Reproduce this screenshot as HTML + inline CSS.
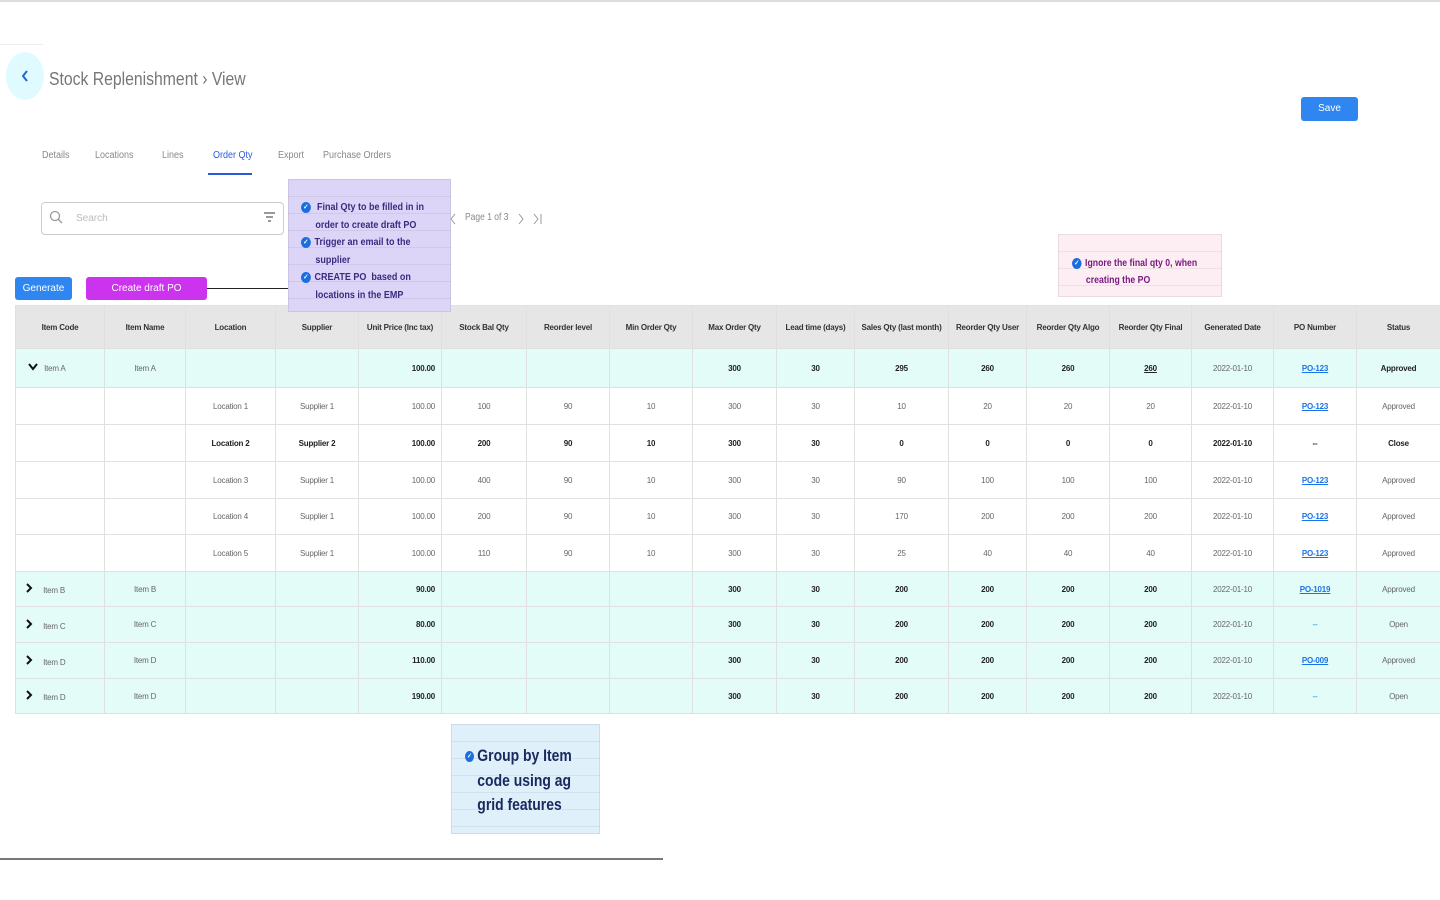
<!DOCTYPE html>
<html><head><meta charset="utf-8"><style>
*{box-sizing:border-box;margin:0;padding:0}
body{width:1440px;height:900px;background:#fff;position:relative;overflow:hidden;font-family:"Liberation Sans",sans-serif;color:#333}
.a{position:absolute}
table{position:absolute;left:15px;top:305px;border-collapse:collapse;table-layout:fixed;width:1425px;font-size:8px}
td,th{border:1px solid #e0e0e0;text-align:center;color:#666;white-space:nowrap;overflow:hidden;letter-spacing:-0.2px}
th{background:#e6e6e6;color:#333;font-weight:bold;font-size:8px}
tr.g td{background:#e3fcf7}
.b{font-weight:bold;color:#222!important}
.r{text-align:right;padding-right:6px}
.lk{color:#1a73e8!important;text-decoration:underline;font-weight:bold}
.note{position:absolute;background-image:repeating-linear-gradient(to bottom,transparent 0,transparent 16px,rgba(0,0,0,.06) 16px,rgba(0,0,0,.06) 17px);font-weight:bold;border:1px solid rgba(0,0,0,.08);white-space:nowrap}
.note .in{transform-origin:0 0}
.chk{display:inline-block;width:11px;height:11px;border-radius:50%;background:#1a6fe0;color:#fff;font-size:7px;line-height:11px;text-align:center;vertical-align:middle;margin-right:4px}
.tab span{position:absolute;white-space:nowrap;transform:scaleX(.9);transform-origin:0 0}
</style></head><body>
<div class="a" style="left:0;top:0;width:1440px;height:2px;background:#ddd"></div>
<div class="a" style="left:0;top:44px;width:43px;height:1px;background:#eee"></div>
<div class="a" style="left:6px;top:52px;width:38px;height:48px;border-radius:50%;background:#e0fbff"></div>
<svg class="a" style="left:20px;top:69px" width="10" height="14"><path d="M7 2L3 7l4 5" fill="none" stroke="#2563d8" stroke-width="2"/></svg>
<div class="a" style="left:49px;top:69px;color:#777;font-size:18px;white-space:nowrap;transform:scaleX(.875);transform-origin:0 0">Stock Replenishment › View</div>
<div class="a" style="left:1301px;top:97px;width:57px;height:24px;background:#2f86f0;border-radius:3px;color:#fff;font-size:10px;text-align:center;line-height:24px">Save</div>
<div class="a tab" style="top:150px;left:0;font-size:10px;color:#888">
<span style="left:42px">Details</span><span style="left:95px">Locations</span><span style="left:162px">Lines</span><span style="left:213px;color:#2a5bd7">Order Qty</span><span style="left:278px">Export</span><span style="left:323px">Purchase Orders</span></div>
<div class="a" style="left:208px;top:173px;width:44px;height:2px;background:#2a5bd7"></div>
<div class="a" style="left:41px;top:202px;width:243px;height:33px;border:1.5px solid #ccc;border-radius:4px"></div>
<svg class="a" style="left:49px;top:210px" width="14" height="14"><circle cx="6" cy="6" r="4.5" fill="none" stroke="#999" stroke-width="1.3"/><path d="M9 9l4 4" stroke="#999" stroke-width="1.3"/></svg>
<div class="a" style="left:76px;top:213px;font-size:10px;color:#bbb">Search</div>
<svg class="a" style="left:263px;top:211px" width="13" height="13"><path d="M1 2h11M3 6h7M5 10h3" stroke="#999" stroke-width="2"/></svg>
<svg class="a" style="left:450px;top:213px" width="96" height="12"><path d="M5 1L1 6l4 5M69 1l4 5-4 5M84 1l4 5-4 5M91 1v10" fill="none" stroke="#999" stroke-width="1"/></svg>
<div class="a" style="left:465px;top:212px;font-size:10px;color:#888;white-space:nowrap;transform:scaleX(.85);transform-origin:0 0">Page 1 of 3</div>
<div class="a" style="left:15px;top:277px;width:57px;height:23px;background:#2f86f0;border-radius:3px;color:#fff;font-size:10px;text-align:center;line-height:23px">Generate</div>
<div class="a" style="left:86px;top:277px;width:121px;height:23px;background:#cc33ee;border-radius:3px;color:#fff;font-size:10px;text-align:center;line-height:23px">Create draft PO</div>
<div class="a" style="left:207px;top:288px;width:81px;height:1px;background:#222"></div>
<table>
<colgroup><col style="width:89px"><col style="width:81px"><col style="width:90px"><col style="width:83px"><col style="width:83px"><col style="width:85px"><col style="width:83px"><col style="width:83px"><col style="width:84px"><col style="width:78px"><col style="width:94px"><col style="width:78px"><col style="width:83px"><col style="width:82px"><col style="width:82px"><col style="width:83px"><col style="width:84px"></colgroup>
<tr style="height:43px"><th>Item Code</th><th>Item Name</th><th>Location</th><th>Supplier</th><th>Unit Price (Inc tax)</th><th>Stock Bal Qty</th><th>Reorder level</th><th>Min Order Qty</th><th>Max Order Qty</th><th>Lead time (days)</th><th>Sales Qty (last month)</th><th>Reorder Qty User</th><th>Reorder Qty Algo</th><th>Reorder Qty Final</th><th>Generated Date</th><th>PO Number</th><th>Status</th></tr>
<tr class="g" style="height:39px"><td style="text-align:left;padding-left:12px"><svg width="10" height="8"><path d="M1 1l4 5 4-5" fill="none" stroke="#111" stroke-width="2"/></svg>&nbsp;&nbsp;&nbsp;Item A</td><td>Item A</td><td></td><td></td><td class="r b">100.00</td><td></td><td></td><td></td><td class="b">300</td><td class="b">30</td><td class="b">295</td><td class="b">260</td><td class="b">260</td><td class="b" style="text-decoration:underline">260</td><td>2022-01-10</td><td class="lk">PO-123</td><td class="b">Approved</td></tr>
<tr style="height:37px"><td></td><td></td><td>Location 1</td><td>Supplier 1</td><td class="r">100.00</td><td>100</td><td>90</td><td>10</td><td>300</td><td>30</td><td>10</td><td>20</td><td>20</td><td>20</td><td>2022-01-10</td><td class="lk">PO-123</td><td>Approved</td></tr>
<tr style="height:37px"><td></td><td></td><td class="b">Location 2</td><td class="b">Supplier 2</td><td class="r b">100.00</td><td class="b">200</td><td class="b">90</td><td class="b">10</td><td class="b">300</td><td class="b">30</td><td class="b">0</td><td class="b">0</td><td class="b">0</td><td class="b">0</td><td class="b">2022-01-10</td><td class="b">--</td><td class="b">Close</td></tr>
<tr style="height:37px"><td></td><td></td><td>Location 3</td><td>Supplier 1</td><td class="r">100.00</td><td>400</td><td>90</td><td>10</td><td>300</td><td>30</td><td>90</td><td>100</td><td>100</td><td>100</td><td>2022-01-10</td><td class="lk">PO-123</td><td>Approved</td></tr>
<tr style="height:36px"><td></td><td></td><td>Location 4</td><td>Supplier 1</td><td class="r">100.00</td><td>200</td><td>90</td><td>10</td><td>300</td><td>30</td><td>170</td><td>200</td><td>200</td><td>200</td><td>2022-01-10</td><td class="lk">PO-123</td><td>Approved</td></tr>
<tr style="height:37px"><td></td><td></td><td>Location 5</td><td>Supplier 1</td><td class="r">100.00</td><td>110</td><td>90</td><td>10</td><td>300</td><td>30</td><td>25</td><td>40</td><td>40</td><td>40</td><td>2022-01-10</td><td class="lk">PO-123</td><td>Approved</td></tr>
<tr class="g" style="height:35px"><td style="text-align:left;padding-left:9px"><svg width="8" height="10"><path d="M2 1l4 4-4 4" fill="none" stroke="#111" stroke-width="2"/></svg>&nbsp;&nbsp;&nbsp;&nbsp;&nbsp;Item B</td><td>Item B</td><td></td><td></td><td class="r b">90.00</td><td></td><td></td><td></td><td class="b">300</td><td class="b">30</td><td class="b">200</td><td class="b">200</td><td class="b">200</td><td class="b">200</td><td>2022-01-10</td><td class="lk">PO-1019</td><td>Approved</td></tr>
<tr class="g" style="height:36px"><td style="text-align:left;padding-left:9px"><svg width="8" height="10"><path d="M2 1l4 4-4 4" fill="none" stroke="#111" stroke-width="2"/></svg>&nbsp;&nbsp;&nbsp;&nbsp;&nbsp;Item C</td><td>Item C</td><td></td><td></td><td class="r b">80.00</td><td></td><td></td><td></td><td class="b">300</td><td class="b">30</td><td class="b">200</td><td class="b">200</td><td class="b">200</td><td class="b">200</td><td>2022-01-10</td><td style="color:#1a73e8">--</td><td>Open</td></tr>
<tr class="g" style="height:36px"><td style="text-align:left;padding-left:9px"><svg width="8" height="10"><path d="M2 1l4 4-4 4" fill="none" stroke="#111" stroke-width="2"/></svg>&nbsp;&nbsp;&nbsp;&nbsp;&nbsp;Item D</td><td>Item D</td><td></td><td></td><td class="r b">110.00</td><td></td><td></td><td></td><td class="b">300</td><td class="b">30</td><td class="b">200</td><td class="b">200</td><td class="b">200</td><td class="b">200</td><td>2022-01-10</td><td class="lk">PO-009</td><td>Approved</td></tr>
<tr class="g" style="height:35px"><td style="text-align:left;padding-left:9px"><svg width="8" height="10"><path d="M2 1l4 4-4 4" fill="none" stroke="#111" stroke-width="2"/></svg>&nbsp;&nbsp;&nbsp;&nbsp;&nbsp;Item D</td><td>Item D</td><td></td><td></td><td class="r b">190.00</td><td></td><td></td><td></td><td class="b">300</td><td class="b">30</td><td class="b">200</td><td class="b">200</td><td class="b">200</td><td class="b">200</td><td>2022-01-10</td><td style="color:#1a73e8">--</td><td>Open</td></tr>
</table>
<div class="note" style="left:288px;top:179px;width:163px;height:133px;background-color:#ddd5f7;color:#3a2a80;font-size:10px;line-height:17.5px;padding:19px 0 0 12px"><div class="in" style="transform:scaleX(.9)">
<div><span class="chk">✓</span> Final Qty to be filled in in</div><div style="padding-left:16px">order to create draft PO</div><div><span class="chk">✓</span>Trigger an email to the</div><div style="padding-left:16px">supplier</div><div><span class="chk">✓</span>CREATE PO&nbsp; based on</div><div style="padding-left:16px">locations in the EMP</div></div></div>
<div class="note" style="left:1058px;top:234px;width:164px;height:63px;background-color:#fdeef3;color:#7a1a80;font-size:10px;line-height:17px;padding:20px 0 0 13px"><div class="in" style="transform:scaleX(.87)">
<div><span class="chk">✓</span>Ignore the final qty 0, when</div><div style="padding-left:16px">creating the PO</div></div></div>
<div class="note" style="left:451px;top:724px;width:149px;height:110px;background-color:#dff0fb;color:#1a2a60;font-size:17px;line-height:24.5px;padding:19px 0 0 13px"><div class="in" style="transform:scaleX(.82)">
<div><span class="chk">✓</span>Group by Item</div><div style="padding-left:15px">code using ag</div><div style="padding-left:15px">grid features</div></div></div>
<div class="a" style="left:0;top:858px;width:663px;height:2px;background:#777"></div>
</body></html>
